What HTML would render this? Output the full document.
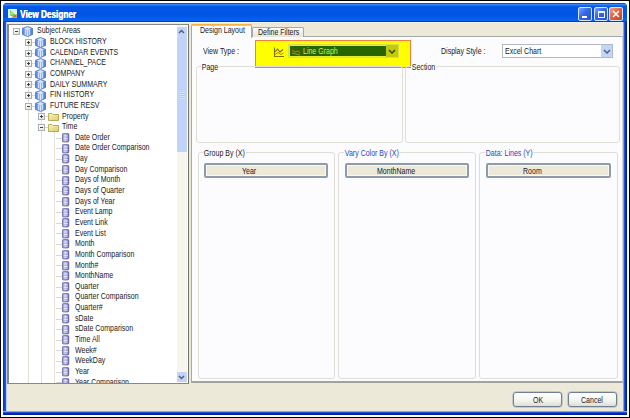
<!DOCTYPE html>
<html><head><meta charset="utf-8"><style>
*{margin:0;padding:0;box-sizing:border-box}
html,body{width:630px;height:418px;overflow:hidden;background:#fff;font-family:"Liberation Sans",sans-serif;font-size:8px;color:#000}
.a{position:absolute}
.t{position:absolute;white-space:nowrap;line-height:10px;height:10px;font-size:9px;transform:scaleX(.78);transform-origin:0 0;color:#1a1a1a}
.tt{color:#fff;font-weight:bold;font-size:10px;transform:scaleX(.82);transform-origin:0 0;text-shadow:.4px 0 0 #fff}
.tbtn{position:absolute;width:14px;height:14px;border:1px solid #d8e4fc;border-radius:2px}
.vl{position:absolute;width:1px;background:#e2e2da}
.hl{position:absolute;height:1px;background:#d8d8d0}
.exp{position:absolute;width:7px;height:7px;border:1px solid #a8b0b8;background:linear-gradient(135deg,#fff,#e4e2d8)}
.exp:before{content:"";position:absolute;left:1px;top:2px;width:3px;height:1px;background:#404040}
.exp.p:after{content:"";position:absolute;left:2px;top:1px;width:1px;height:3px;background:#404040}
.fld{position:absolute;width:7px;height:9px;background:repeating-linear-gradient(#8080c8 0 1px,#e6e6fa 1px 2px);border:1px solid #6a6aac;border-radius:1px}
.gb{position:absolute;border:1px solid #dfded6;border-radius:3px}
.gbt{position:absolute;background:#fcfcfe;padding:0 1px;white-space:nowrap;line-height:8px;font-size:9px;transform:scaleX(.78);transform-origin:0 0;color:#1a1a1a}
.btn{position:absolute;background:#ece9d8;border:2px solid #8d9bab;border-radius:2px;box-shadow:inset 0 0 0 1px #f8f7f0}
.xbtn{position:absolute;background:linear-gradient(#fff,#f3f3ee 60%,#e0ded4);border:1px solid #6f8096;border-radius:3px;box-shadow:0 0 0 .5px #a0acb8}
</style></head><body>
<svg width="0" height="0" style="position:absolute"><defs>
<linearGradient id="cg" x1="0" y1="0" x2="1" y2="0"><stop offset="0" stop-color="#4a7ad8"/><stop offset=".5" stop-color="#a8c6f8"/><stop offset="1" stop-color="#3e6cd0"/></linearGradient>
<g id="cube"><path d="M5.5 0.4L10.6 2.4Q10.8 5.5 10.6 8.4L5.5 10.6L0.4 8.4Q0.2 5.5 0.4 2.4Z" fill="url(#cg)" stroke="#4068c4" stroke-width=".7"/><path d="M5.5 1.2L9.2 2.8L5.5 4.2L1.8 2.8Z" fill="#d8e6ff"/><path d="M3.4 4V9M5.5 4.5V10M7.6 4V9" stroke="#eef4ff" stroke-width=".8"/></g>
<linearGradient id="fg" x1="0" y1="0" x2="1" y2="1"><stop offset="0" stop-color="#fbf7c0"/><stop offset="1" stop-color="#d8cc68"/></linearGradient>
<linearGradient id="fdg" x1="0" y1="0" x2="1" y2="0"><stop offset="0" stop-color="#8484c4"/><stop offset=".45" stop-color="#b4b4e4"/><stop offset="1" stop-color="#54549a"/></linearGradient>
<g id="fld"><rect x=".4" y=".4" width="6.4" height="8.6" rx="1.2" fill="url(#fdg)" stroke="#5c5c9c" stroke-width=".7"/><path d="M1.6 2.3H5.8M1.6 3.9H5.8M1.6 5.5H5.8M1.6 7.1H5.8" stroke="#f0f0ff" stroke-width=".8"/></g>
<g id="fold"><path d="M0.5 1.5H4L5 2.5H10.5V8.5H0.5Z" fill="url(#fg)" stroke="#a89a40" stroke-width=".8"/></g>
</defs></svg>
<div class="a" style="left:0;top:0;width:630px;height:1px;background:#000"></div>
<div class="a" style="left:0;top:0;width:1px;height:418px;background:#000"></div>
<div class="a" style="left:629px;top:0;width:1px;height:418px;background:#000"></div>
<div class="a" style="left:0;top:417px;width:630px;height:1px;background:#000"></div>
<div class="a" style="left:3px;top:3px;width:624px;height:412px;background:#0a46d8;border-radius:4px 4px 0 0"></div>
<div class="a" style="left:3px;top:12px;width:4px;height:403px;background:linear-gradient(90deg,#0030c0,#1656e8 2.5px,#b8d0f8 3.5px,#c8d8f8 4px)"></div>
<div class="a" style="left:623px;top:12px;width:4px;height:403px;background:linear-gradient(90deg,#c0d4f8 0,#3a70e8 1px,#0838c8 2px,#001a98 4px)"></div>
<div class="a" style="left:3px;top:411px;width:624px;height:4px;background:linear-gradient(#c8d8f8,#3a70e8 1px,#0030c0 2px,#001a90 4px)"></div>
<div class="a" style="left:3px;top:3px;width:624px;height:19px;border-radius:4px 4px 0 0;background:linear-gradient(#1c4cc4 0,#1c4cc4 .8px,#3c86f4 1px,#3a84f4 1.8px,#1468ee 2.6px,#0058e6 4px,#0054e2 12px,#0058e8 14px,#0864f2 17px,#0a5ee8 17.8px,#0040c4 18.5px,#0034b0 19px)"></div>
<div class="a" style="left:7px;top:22px;width:616px;height:389px;background:#ECE9D8;border-top:1px solid #eef0f8"></div>
<svg class="a" style="left:8px;top:9px" width="9" height="9"><rect width="9" height="9" fill="#e4eefa"/><path d="M0 9H9V3Z" fill="#f4f4f0"/><path d="M2 1L8 6.5L2.5 7Z" fill="#5cc83c"/><circle cx="4" cy="4.2" r="1.6" fill="#9cf070"/><path d="M3 8.5L8.5 5L8.8 8.8Z" fill="#b87a28"/></svg>
<div class="a tt" style="left:20px;top:8.5px;line-height:12px">View Designer</div>
<div class="tbtn" style="left:578px;top:7px;background:linear-gradient(135deg,#7aa4f8,#3466e6 45%,#2454d8)"><div class="a" style="left:3px;top:8px;width:5px;height:2px;background:#fff"></div></div>
<div class="tbtn" style="left:594px;top:7px;background:linear-gradient(135deg,#7aa4f8,#3466e6 45%,#2454d8)"><div class="a" style="left:2.5px;top:2.5px;width:7.5px;height:7px;border:1px solid #f0f4ff;border-top-width:2px"></div></div>
<div class="tbtn" style="left:609px;top:7px;background:linear-gradient(135deg,#f4a080,#e06038 50%,#c84020)"><svg class="a" style="left:2px;top:2px" width="8" height="8"><path d="M1 1L7 7M7 1L1 7" stroke="#fff" stroke-width="1.6"/></svg></div>
<div class="a" style="left:7px;top:24px;width:182px;height:360px;background:#fff;border:1px solid #868a82;border-left-width:2px;border-right-color:#70746c"></div>
<div class="a" style="left:9px;top:25px;width:168px;height:358px;overflow:hidden">
<div class="a" style="left:-9px;top:-25px;width:200px;height:400px"><div class="vl" style="left:28px;top:36px;height:347px"></div><div class="vl" style="left:41px;top:110px;height:273px"></div><div class="vl" style="left:54px;top:131px;height:252px"></div><div class="exp m" style="left:13px;top:28.2px"></div><svg class="a" style="left:22px;top:26.0px" width="11" height="11"><use href="#cube"/></svg><div class="t" style="left:37px;top:25.4px">Subject Areas</div><div class="hl" style="left:28px;top:41.8px;width:7px"></div><div class="exp p" style="left:25px;top:38.8px"></div><svg class="a" style="left:35px;top:36.6px" width="11" height="11"><use href="#cube"/></svg><div class="t" style="left:50px;top:36.0px">BLOCK HISTORY</div><div class="hl" style="left:28px;top:52.5px;width:7px"></div><div class="exp p" style="left:25px;top:49.5px"></div><svg class="a" style="left:35px;top:47.3px" width="11" height="11"><use href="#cube"/></svg><div class="t" style="left:50px;top:46.7px">CALENDAR EVENTS</div><div class="hl" style="left:28px;top:63.1px;width:7px"></div><div class="exp p" style="left:25px;top:60.1px"></div><svg class="a" style="left:35px;top:57.9px" width="11" height="11"><use href="#cube"/></svg><div class="t" style="left:50px;top:57.3px">CHANNEL_PACE</div><div class="hl" style="left:28px;top:73.8px;width:7px"></div><div class="exp p" style="left:25px;top:70.8px"></div><svg class="a" style="left:35px;top:68.6px" width="11" height="11"><use href="#cube"/></svg><div class="t" style="left:50px;top:68.0px">COMPANY</div><div class="hl" style="left:28px;top:84.4px;width:7px"></div><div class="exp p" style="left:25px;top:81.4px"></div><svg class="a" style="left:35px;top:79.2px" width="11" height="11"><use href="#cube"/></svg><div class="t" style="left:50px;top:78.6px">DAILY SUMMARY</div><div class="hl" style="left:28px;top:95.0px;width:7px"></div><div class="exp p" style="left:25px;top:92.0px"></div><svg class="a" style="left:35px;top:89.8px" width="11" height="11"><use href="#cube"/></svg><div class="t" style="left:50px;top:89.2px">FIN HISTORY</div><div class="hl" style="left:28px;top:105.7px;width:7px"></div><div class="exp m" style="left:25px;top:102.7px"></div><svg class="a" style="left:35px;top:100.5px" width="11" height="11"><use href="#cube"/></svg><div class="t" style="left:50px;top:99.9px">FUTURE RESV</div><div class="hl" style="left:41px;top:116.3px;width:7px"></div><div class="exp p" style="left:38px;top:113.3px"></div><svg class="a" style="left:48px;top:111.8px" width="11" height="9"><use href="#fold"/></svg><div class="t" style="left:62px;top:110.5px">Property</div><div class="hl" style="left:41px;top:127.0px;width:7px"></div><div class="exp m" style="left:38px;top:124.0px"></div><svg class="a" style="left:48px;top:122.5px" width="11" height="9"><use href="#fold"/></svg><div class="t" style="left:62px;top:121.2px">Time</div><div class="hl" style="left:56px;top:137.6px;width:6px"></div><svg class="a" style="left:62px;top:133.0px" width="7.5" height="10"><use href="#fld"/></svg><div class="t" style="left:75px;top:131.8px">Date Order</div><div class="hl" style="left:56px;top:148.2px;width:6px"></div><svg class="a" style="left:62px;top:143.6px" width="7.5" height="10"><use href="#fld"/></svg><div class="t" style="left:75px;top:142.4px">Date Order Comparison</div><div class="hl" style="left:56px;top:158.9px;width:6px"></div><svg class="a" style="left:62px;top:154.3px" width="7.5" height="10"><use href="#fld"/></svg><div class="t" style="left:75px;top:153.1px">Day</div><div class="hl" style="left:56px;top:169.5px;width:6px"></div><svg class="a" style="left:62px;top:164.9px" width="7.5" height="10"><use href="#fld"/></svg><div class="t" style="left:75px;top:163.7px">Day Comparison</div><div class="hl" style="left:56px;top:180.2px;width:6px"></div><svg class="a" style="left:62px;top:175.6px" width="7.5" height="10"><use href="#fld"/></svg><div class="t" style="left:75px;top:174.4px">Days of Month</div><div class="hl" style="left:56px;top:190.8px;width:6px"></div><svg class="a" style="left:62px;top:186.2px" width="7.5" height="10"><use href="#fld"/></svg><div class="t" style="left:75px;top:185.0px">Days of Quarter</div><div class="hl" style="left:56px;top:201.4px;width:6px"></div><svg class="a" style="left:62px;top:196.8px" width="7.5" height="10"><use href="#fld"/></svg><div class="t" style="left:75px;top:195.6px">Days of Year</div><div class="hl" style="left:56px;top:212.1px;width:6px"></div><svg class="a" style="left:62px;top:207.5px" width="7.5" height="10"><use href="#fld"/></svg><div class="t" style="left:75px;top:206.3px">Event Lamp</div><div class="hl" style="left:56px;top:222.7px;width:6px"></div><svg class="a" style="left:62px;top:218.1px" width="7.5" height="10"><use href="#fld"/></svg><div class="t" style="left:75px;top:216.9px">Event Link</div><div class="hl" style="left:56px;top:233.4px;width:6px"></div><svg class="a" style="left:62px;top:228.8px" width="7.5" height="10"><use href="#fld"/></svg><div class="t" style="left:75px;top:227.6px">Event List</div><div class="hl" style="left:56px;top:244.0px;width:6px"></div><svg class="a" style="left:62px;top:239.4px" width="7.5" height="10"><use href="#fld"/></svg><div class="t" style="left:75px;top:238.2px">Month</div><div class="hl" style="left:56px;top:254.6px;width:6px"></div><svg class="a" style="left:62px;top:250.0px" width="7.5" height="10"><use href="#fld"/></svg><div class="t" style="left:75px;top:248.8px">Month Comparison</div><div class="hl" style="left:56px;top:265.3px;width:6px"></div><svg class="a" style="left:62px;top:260.7px" width="7.5" height="10"><use href="#fld"/></svg><div class="t" style="left:75px;top:259.5px">Month#</div><div class="hl" style="left:56px;top:275.9px;width:6px"></div><svg class="a" style="left:62px;top:271.3px" width="7.5" height="10"><use href="#fld"/></svg><div class="t" style="left:75px;top:270.1px">MonthName</div><div class="hl" style="left:56px;top:286.6px;width:6px"></div><svg class="a" style="left:62px;top:282.0px" width="7.5" height="10"><use href="#fld"/></svg><div class="t" style="left:75px;top:280.8px">Quarter</div><div class="hl" style="left:56px;top:297.2px;width:6px"></div><svg class="a" style="left:62px;top:292.6px" width="7.5" height="10"><use href="#fld"/></svg><div class="t" style="left:75px;top:291.4px">Quarter Comparison</div><div class="hl" style="left:56px;top:307.8px;width:6px"></div><svg class="a" style="left:62px;top:303.2px" width="7.5" height="10"><use href="#fld"/></svg><div class="t" style="left:75px;top:302.0px">Quarter#</div><div class="hl" style="left:56px;top:318.5px;width:6px"></div><svg class="a" style="left:62px;top:313.9px" width="7.5" height="10"><use href="#fld"/></svg><div class="t" style="left:75px;top:312.7px">sDate</div><div class="hl" style="left:56px;top:329.1px;width:6px"></div><svg class="a" style="left:62px;top:324.5px" width="7.5" height="10"><use href="#fld"/></svg><div class="t" style="left:75px;top:323.3px">sDate Comparison</div><div class="hl" style="left:56px;top:339.8px;width:6px"></div><svg class="a" style="left:62px;top:335.2px" width="7.5" height="10"><use href="#fld"/></svg><div class="t" style="left:75px;top:334.0px">Time All</div><div class="hl" style="left:56px;top:350.4px;width:6px"></div><svg class="a" style="left:62px;top:345.8px" width="7.5" height="10"><use href="#fld"/></svg><div class="t" style="left:75px;top:344.6px">Week#</div><div class="hl" style="left:56px;top:361.0px;width:6px"></div><svg class="a" style="left:62px;top:356.4px" width="7.5" height="10"><use href="#fld"/></svg><div class="t" style="left:75px;top:355.2px">WeekDay</div><div class="hl" style="left:56px;top:371.7px;width:6px"></div><svg class="a" style="left:62px;top:367.1px" width="7.5" height="10"><use href="#fld"/></svg><div class="t" style="left:75px;top:365.9px">Year</div><div class="hl" style="left:56px;top:382.3px;width:6px"></div><svg class="a" style="left:62px;top:377.7px" width="7.5" height="10"><use href="#fld"/></svg><div class="t" style="left:75px;top:376.5px">Year Comparison</div></div></div>
<div class="a" style="left:177px;top:25px;width:10px;height:358px;background:#f6f5ee"></div>
<div class="a" style="left:177px;top:27px;width:10px;height:10px;background:#c4d4f8;border-radius:1px"><svg class="a" style="left:1px;top:2px" width="7" height="5"><path d="M1 4L3.5 1.5L6 4" stroke="#4d6185" stroke-width="1.5" fill="none"/></svg></div>
<div class="a" style="left:177px;top:37px;width:10px;height:115px;background:#c2d3fa;border-radius:1px"></div>
<div class="a" style="left:180px;top:92px;width:5px;height:7px;background:repeating-linear-gradient(#d8e4fc 0 1px,#b4c6f0 1px 2px)"></div>
<div class="a" style="left:177px;top:372px;width:10px;height:10px;background:#c4d4f8;border-radius:1px"><svg class="a" style="left:1px;top:3px" width="7" height="5"><path d="M1 1L3.5 3.5L6 1" stroke="#4d6185" stroke-width="1.5" fill="none"/></svg></div>
<div class="a" style="left:191px;top:36px;width:432px;height:347px;background:#fcfcfe;border:1px solid #a4aaa8;border-right-color:#d4d4cc;border-bottom:2px solid #a0a49c"></div>
<div class="a" style="left:252px;top:27px;width:52px;height:10px;background:linear-gradient(#fcfcfa,#e6e4da);border:1px solid #a4aaa8;border-bottom:none;border-radius:2px 2px 0 0"></div>
<div class="t" style="left:258px;top:27px;">Define Filters</div>
<div class="a" style="left:191px;top:24px;width:61px;height:14px;background:#fcfcfe;border:1px solid #a4aaa8;border-bottom:none;border-radius:2px 2px 0 0"></div>
<div class="a" style="left:191px;top:24px;width:61px;height:2px;background:linear-gradient(#f0a830,#fcd070);border-radius:2px 2px 0 0"></div>
<div class="t" style="left:200px;top:25px;">Design Layout</div>
<div class="t" style="left:203px;top:46px;">View Type :</div>
<div class="a" style="left:255px;top:40px;width:156px;height:28px;background:#ffff00;border:1px solid #f08040"></div>
<svg class="a" style="left:273px;top:47px" width="12" height="11"><path d="M1.5 0.5V9.5H11" stroke="#7a7a00" stroke-width="1.1" fill="none"/><path d="M2 5L4.5 2L7 5L10 2.5" stroke="#6a7000" stroke-width="1.1" fill="none"/><path d="M2 7.5L5 5.5L8 7.5L10.5 6" stroke="#e86018" stroke-width="1" fill="none"/></svg>
<div class="a" style="left:288px;top:44px;width:111px;height:14px;background:#e4ec30;border:1px solid #d8e040"></div>
<div class="a" style="left:290px;top:46px;width:96px;height:10px;background:#286400"></div>
<svg class="a" style="left:291px;top:48px" width="10" height="8"><path d="M1 2L4 4L7 3L9 5" stroke="#c06020" stroke-width="1.2" fill="none"/><path d="M1 5L5 6L9 7" stroke="#a0a020" stroke-width="1" fill="none"/></svg>
<div class="t" style="left:303px;top:46px;color:#d4f040">Line Graph</div>
<div class="a" style="left:386px;top:45px;width:12px;height:12px;background:#c0c810"><svg class="a" style="left:2px;top:4px" width="8" height="5"><path d="M1 1L4 4L7 1" stroke="#3a4a00" stroke-width="1.5" fill="none"/></svg></div>
<div class="t" style="left:441px;top:46px;">Display Style :</div>
<div class="a" style="left:502px;top:44px;width:111px;height:14px;background:#fff;border:1px solid #b0b8c0"></div>
<div class="t" style="left:505px;top:46px;">Excel Chart</div>
<div class="a" style="left:601px;top:45px;width:11px;height:12px;background:#c4d4f8;border-radius:1px"><svg class="a" style="left:2px;top:4px" width="8" height="5"><path d="M1 1L4 4L7 1" stroke="#4d6185" stroke-width="1.5" fill="none"/></svg></div>
<div class="gb" style="left:196px;top:66px;width:207px;height:77px"></div>
<div class="gbt" style="left:201px;top:63px;">Page</div>
<div class="gb" style="left:405px;top:66px;width:215px;height:77px"></div>
<div class="gbt" style="left:411px;top:63px;">Section</div>
<div class="gb" style="left:198px;top:152px;width:137px;height:227px"></div>
<div class="gbt" style="left:203px;top:149px;">Group By (X)</div>
<div class="btn" style="left:204px;top:163px;width:124px;height:15px"></div>
<div class="t" style="left:242px;top:166px;">Year</div>
<div class="gb" style="left:338px;top:152px;width:138px;height:227px"></div>
<div class="gbt" style="left:344px;top:149px;color:#3042c0">Vary Color By (X)</div>
<div class="btn" style="left:345px;top:163px;width:124px;height:15px"></div>
<div class="t" style="left:377px;top:166px;">MonthName</div>
<div class="gb" style="left:479px;top:152px;width:139px;height:227px"></div>
<div class="gbt" style="left:485px;top:149px;color:#3042c0">Data: Lines (Y)</div>
<div class="btn" style="left:486px;top:163px;width:125px;height:15px"></div>
<div class="t" style="left:523px;top:166px;">Room</div>
<div class="xbtn" style="left:513px;top:392px;width:49px;height:15px"></div>
<div class="t" style="left:533px;top:395px;">OK</div>
<div class="xbtn" style="left:568px;top:392px;width:49px;height:15px"></div>
<div class="t" style="left:581px;top:395px;">Cancel</div>
</body></html>
